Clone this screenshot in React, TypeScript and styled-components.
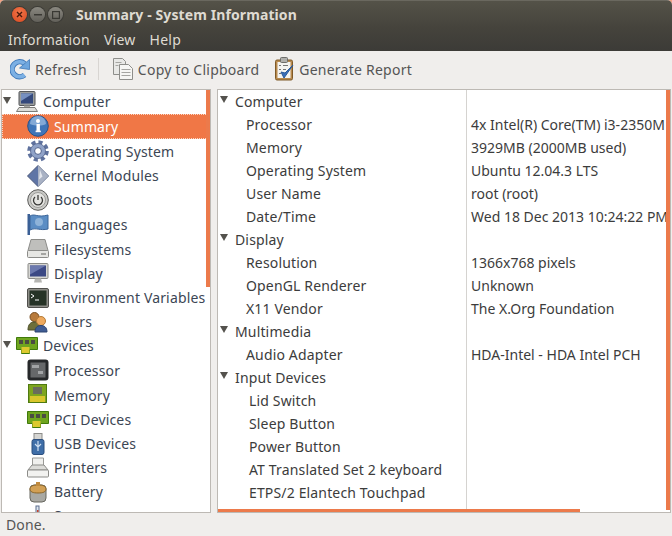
import React from 'react'
import styled, { createGlobalStyle } from 'styled-components'

const GlobalStyle = createGlobalStyle`
  html, body {
    margin: 0;
    padding: 0;
    width: 672px;
    height: 536px;
    overflow: hidden;
    background: #f2a283;
  }
`

const FONT = `"Noto Sans", "Open Sans", sans-serif`

const Window = styled.div`
  width: 672px;
  height: 536px;
  display: flex;
  flex-direction: column;
  overflow: hidden;
  border-radius: 5px 5px 0 0;
  background: #f0eeec;
  font-family: ${FONT};
  font-size: 14px;
  letter-spacing: 0.15px;
  color: #3c3c3c;
`

const TitleBar = styled.div`
  height: 28px;
  flex: none;
  display: flex;
  align-items: center;
  padding: 0 0 0 12px;
  background: linear-gradient(#545248, #45433c);
  border-top: 1px solid #6a685f;
  box-sizing: border-box;
`

const WindowButtons = styled.div`
  display: flex;
  gap: 3px;
  margin-right: 13px;
`

const WindowButton = styled.div<{ $close?: boolean }>`
  width: 15px;
  height: 15px;
  border-radius: 50%;
  display: flex;
  align-items: center;
  justify-content: center;
  box-shadow: 0 0 0 1px #3c3b36;
  background: ${(p) =>
    p.$close
      ? 'radial-gradient(circle at 50% 35%, #f2764a, #d9481f)'
      : 'linear-gradient(#8a8880, #62605a)'};
`

const Title = styled.div`
  font-weight: 700;
  font-size: 14px;
  letter-spacing: 0.1px;
  color: #dfdbd2;
`

const MenuBar = styled.div`
  height: 23px;
  flex: none;
  display: flex;
  align-items: center;
  gap: 14px;
  padding: 0 8px 1px;
  box-sizing: border-box;
  background: linear-gradient(#45433c, #3c3b37);
  color: #dfdbd2;
`

const MenuItem = styled.div`
  font-size: 14px;
  letter-spacing: 0.25px;
`

const Toolbar = styled.div`
  height: 38px;
  flex: none;
  display: flex;
  align-items: center;
  padding: 0 0 2px 10px;
  box-sizing: border-box;
  background: #f0eeec;
  color: #555;
  letter-spacing: 0.24px;
`

const ToolButton = styled.div<{ $gap?: number }>`
  display: flex;
  align-items: center;
  gap: 5px;
  margin-right: ${(p) => p.$gap ?? 0}px;
`

const ToolSeparator = styled.div`
  width: 1px;
  height: 22px;
  background: #d8d5d2;
  margin: 0 14px 0 11px;
`

const Panes = styled.div`
  flex: 1;
  min-height: 0;
  display: flex;
  gap: 6px;
  padding: 0 1px 0 1px;
`

const TreePane = styled.div`
  position: relative;
  width: 210px;
  box-sizing: border-box;
  flex: none;
  overflow: hidden;
  background: #fff;
  border: 1px solid #bdb9b4;
`

const ReportPane = styled.div`
  position: relative;
  flex: 1;
  box-sizing: border-box;
  overflow: hidden;
  background: #fff;
  border: 1px solid #bdb9b4;
  display: grid;
  grid-template-columns: 248px 1fr;
`

const TreeRow = styled.div<{ $selected?: boolean; $top?: boolean; $height: number }>`
  height: ${(p) => p.$height}px;
  box-sizing: border-box;
  padding-bottom: 1px;
  display: flex;
  align-items: center;
  white-space: nowrap;
  padding-left: ${(p) => (p.$top ? 1 : 25)}px;
  background: ${(p) => (p.$selected ? '#f07746' : 'transparent')};
  color: ${(p) => (p.$selected ? '#fff' : '#3c4654')};
  outline: ${(p) => (p.$selected ? '1px dotted #fbd7c5' : 'none')};
  outline-offset: -1px;
`

const Expander = styled.span`
  width: 0;
  height: 0;
  border-left: 4px solid transparent;
  border-right: 4px solid transparent;
  border-top: 7px solid #54524d;
  margin-right: 5px;
  margin-top: -2px;
  flex: none;
`

const TreeIcon = styled.span`
  width: 22px;
  height: 22px;
  flex: none;
  margin-right: 5px;
  display: block;
  svg {
    display: block;
  }
`

const Column = styled.div<{ $divider?: boolean }>`
  min-width: 0;
  overflow: hidden;
  border-left: ${(p) => (p.$divider ? '1px solid #d5d3d0' : 'none')};
`

const ReportRow = styled.div<{ $indent: number; $plain?: boolean }>`
  height: 23px;
  line-height: 23px;
  white-space: nowrap;
  padding-left: ${(p) => p.$indent}px;
  color: #3c3c3c;
  display: flex;
  align-items: center;
  letter-spacing: ${(p) => (p.$plain ? 0 : 0.15)}px;
`

const ReportExpander = styled(Expander)`
  margin: -5px 7px 0 -13px;
`

const Track = styled.div<{ $axis: 'x' | 'y' }>`
  position: absolute;
  background: #ec7a4b;
  ${(p) =>
    p.$axis === 'y'
      ? 'right: 0; top: 0; width: 4px;'
      : 'left: 0; bottom: 0; height: 3px;'}
`

const StatusBar = styled.div`
  height: 23px;
  flex: none;
  display: flex;
  align-items: center;
  padding: 0 0 1px 6px;
  box-sizing: border-box;
  color: #555;
`

type IconProps = { name: string }

/* small hand-drawn stand-ins for the hardinfo icon set */
const Icon: React.FC<IconProps> = ({ name }) => {
  const art: Record<string, React.ReactNode> = {
    computer: (
      <>
        <rect x="3" y="0.5" width="16" height="14" rx="1" fill="#9a9d9c" stroke="#55575a" />
        <rect x="5" y="2.500" width="12" height="10" fill="#34497c" />
        <path d="M5 2.500h12L5 10z" fill="#7690c0" />
        <path d="M8 14.500h6v2H8z" fill="#a5a5a2" />
        <path d="M3 16.500h16l2.500 4H0.500z" fill="#dcdcd8" stroke="#7b7b78" />
      </>
    ),
    info: (
      <>
        <circle cx="11" cy="11" r="10.300" fill="#3f75b8" stroke="#2a5288" />
        <path d="M3 9a8 8 0 0 1 16 0c-4 2-11 2-16 0z" fill="#83a9d6" />
        <rect x="9.500" y="9" width="3.400" height="8" fill="#fff" />
        <rect x="8.600" y="15.600" width="5.200" height="1.600" fill="#fff" />
        <circle cx="11" cy="6" r="2" fill="#fff" />
      </>
    ),
    gear: (
      <>
        <circle cx="11" cy="11" r="9" fill="none" stroke="#5f729e" strokeWidth="3.600" strokeDasharray="4.100 3" />
        <circle cx="11" cy="11" r="7.500" fill="#8fa2c8" stroke="#4f618c" strokeWidth="0.800" />
        <circle cx="11" cy="11" r="3.400" fill="#fff" stroke="#4f618c" />
      </>
    ),
    kernel: (
      <>
        <path d="M11 0.500L21.500 11 11 21.500 0.500 11z" fill="#5f75a6" stroke="#4a5878" />
        <path d="M11 0.500L21.500 11 11 21.500z" fill="#a9b2c4" />
        <path d="M13 5l2.500 6.500-3.500 3z" fill="#e3e6ec" />
      </>
    ),
    power: (
      <>
        <circle cx="11" cy="11" r="10.300" fill="#c9c9c6" stroke="#5c5c5a" />
        <circle cx="11" cy="11" r="7.500" fill="#e4e4e1" stroke="#9c9c99" />
        <path d="M8 8a4.500 4.500 0 1 0 6 0M11 6v5" fill="none" stroke="#3a3a38" strokeWidth="1.300" />
      </>
    ),
    flag: (
      <>
        <rect x="0.500" y="1" width="2.500" height="21" fill="#3a5f95" />
        <path d="M3 3c5-3 7 2 18-1v14c-8 2-12-2-18 1z" fill="#5b8dc4" stroke="#3a6498" />
        <circle cx="12" cy="9" r="4" fill="#8eb3d9" />
      </>
    ),
    disk: (
      <>
        <path d="M4 1.500h14l3 11H1z" fill="#bfbfbc" stroke="#8c8c89" />
        <rect x="0.500" y="12.500" width="21" height="7" rx="1" fill="#e6e6e3" stroke="#8c8c89" />
        <rect x="14" y="15" width="5" height="2" fill="#a5a5a2" />
      </>
    ),
    display: (
      <>
        <rect x="1" y="0.500" width="20" height="15" rx="1" fill="#d6d6d3" stroke="#8a8a87" />
        <rect x="3" y="2.500" width="16" height="11" fill="#3b4884" />
        <path d="M3 2.500h16L3 11.500z" fill="#6c79ae" />
        <path d="M8 15.500h6l1 4H7z" fill="#b5b5b2" />
      </>
    ),
    terminal: (
      <>
        <rect x="0.500" y="1.500" width="21" height="19" rx="1.500" fill="#8e8e88" stroke="#50504c" />
        <rect x="2.500" y="3.500" width="17" height="15" fill="#263326" />
        <path d="M4 7l3 2-3 2" fill="none" stroke="#fff" />
        <path d="M8 13h4" stroke="#fff" />
      </>
    ),
    users: (
      <>
        <circle cx="7.500" cy="6" r="4.500" fill="#b87a3a" stroke="#7a4e20" />
        <path d="M1 19c0-6 3-8 6-8s6 2 6 8z" fill="#6d6f3a" stroke="#4d4f28" />
        <circle cx="14" cy="10" r="4.500" fill="#eeaa5f" stroke="#b57a35" />
        <path d="M8 21c0-5 3-6.500 6-6.500s6 1.500 6 6.500z" fill="#3f5c94" stroke="#2d4470" />
      </>
    ),
    board: (
      <>
        <path d="M0.500 2.500h21v12h-8v4h-8v-4H0.500z" fill="#6fa51f" stroke="#3f7a0a" />
        <path d="M5.500 12h8v6h-8z" fill="#dcc92e" />
        <rect x="3" y="5" width="4" height="4" fill="#4a4c42" />
        <rect x="9" y="5" width="4" height="4" fill="#4a4c42" />
        <rect x="15" y="5" width="4" height="4" fill="#4a4c42" />
      </>
    ),
    cpu: (
      <>
        <rect x="0.500" y="0.500" width="21" height="21" rx="3" fill="#26282a" />
        <rect x="3.500" y="3.500" width="15" height="15" fill="#66686a" />
        <rect x="5" y="6" width="7" height="3" fill="#a2a4a6" />
        <rect x="11" y="12" width="5" height="3" fill="#a2a4a6" />
      </>
    ),
    memory: (
      <>
        <rect x="1.500" y="0.500" width="18" height="18" fill="#7ea51f" stroke="#4f7a10" />
        <path d="M3 12h15v6H3z" fill="#d9c62c" />
        <rect x="6" y="3" width="9" height="7" fill="#6a6c5c" />
      </>
    ),
    usb: (
      <>
        <rect x="7" y="0.500" width="8" height="6" fill="#d5d5d2" stroke="#8c8c89" />
        <rect x="5" y="6.500" width="12" height="15" rx="2" fill="#3f6ea8" stroke="#2b4e7e" />
        <path d="M11 8v10M8 11l3 3 3-3" fill="none" stroke="#cfe0f2" strokeWidth="1.200" />
      </>
    ),
    printer: (
      <>
        <path d="M5.500 1h11v8h-11z" fill="#f0f0ee" stroke="#9a9a97" />
        <path d="M5 8h12l4 5H1z" fill="#dcdcd9" stroke="#8c8c89" />
        <rect x="0.500" y="13" width="21" height="7" rx="1" fill="#f2f2f0" stroke="#8c8c89" />
      </>
    ),
    battery: (
      <>
        <rect x="3" y="4" width="16" height="17" rx="4" fill="#a9a9a4" stroke="#66665f" />
        <path d="M3 8c0-3 3-4 8-4s8 1 8 4-3 4-8 4-8-1-8-4z" fill="#d2a055" stroke="#8a6528" />
        <rect x="9" y="1" width="4" height="4" fill="#c08a3e" />
      </>
    ),
    sensor: (
      <>
        <rect x="9" y="1" width="3" height="18" fill="#dfe7f0" stroke="#5a6d8c" />
        <rect x="10" y="5" width="1.500" height="13" fill="#c8402a" />
      </>
    )
  }
  return (
    <svg width="22" height="22" viewBox="0 0 22 22">
      {art[name]}
    </svg>
  )
}

const RefreshIcon = () => (
  <svg width="20" height="22" viewBox="0 0 20 22">
    <path d="M14.500 5.500A7.500 7.500 0 1 0 14.500 17" fill="none" stroke="#3f78b8" strokeWidth="5.500" />
    <path d="M14.500 5.500A7.500 7.500 0 1 0 14.500 17" fill="none" stroke="#7cb0e4" strokeWidth="3.700" />
    <path d="M19.500 1.500v10l-10-1.500z" fill="#6ea6de" stroke="#3f78b8" strokeWidth="0.800" />
  </svg>
)

const CopyIcon = () => (
  <svg width="20" height="22" viewBox="0 0 20 22">
    <path d="M0.500 0.500h9l3 3v13h-12z" fill="#e8e8e6" stroke="#8e8e8b" />
    <path d="M6.500 6.500h9l4 4v11h-13z" fill="#f6f6f4" stroke="#8e8e8b" />
    <path d="M2.500 4.500h6M2.500 7.500h3M8.500 11.500h9M8.500 14.500h9M8.500 17.500h9" stroke="#a5a5a2" />
  </svg>
)

const ReportIcon = () => (
  <svg width="19" height="24" viewBox="0 0 19 24">
    <rect x="0.500" y="3" width="17" height="20" rx="1.500" fill="#b88a4e" stroke="#7f5a28" />
    <rect x="2.500" y="5" width="13" height="16" fill="#f4f4f2" />
    <rect x="5.500" y="0.500" width="7" height="5" rx="1" fill="#b0b0ad" stroke="#6e6e6b" />
    <path d="M4 8.500h2M8 8.500h5M4 12.500h2M8 12.500h3M4 16.500h2" stroke="#777" />
    <path d="M6 15l3 6 9-13-8 8z" fill="#3a6fb8" stroke="#2a5a9c" />
  </svg>
)

const CloseGlyph = () => (
  <svg width="7" height="7" viewBox="0 0 7 7">
    <path d="M1 1l5 5M6 1l-5 5" stroke="#4a1a0c" strokeWidth="1.400" />
  </svg>
)

const MinGlyph = () => (
  <svg width="8" height="2" viewBox="0 0 8 2">
    <rect width="8" height="1.500" fill="#3a3934" />
  </svg>
)

const MaxGlyph = () => (
  <svg width="8" height="8" viewBox="0 0 8 8">
    <rect x="0.600" y="0.600" width="6.800" height="6.800" fill="none" stroke="#3a3934" strokeWidth="1.200" />
  </svg>
)

const treeItems = [
  { label: 'Computer', icon: 'computer', height: 24, top: true },
  { label: 'Summary', icon: 'info', height: 25, selected: true },
  { label: 'Operating System', icon: 'gear', height: 25 },
  { label: 'Kernel Modules', icon: 'kernel', height: 24 },
  { label: 'Boots', icon: 'power', height: 24 },
  { label: 'Languages', icon: 'flag', height: 25 },
  { label: 'Filesystems', icon: 'disk', height: 25 },
  { label: 'Display', icon: 'display', height: 24 },
  { label: 'Environment Variables', icon: 'terminal', height: 24 },
  { label: 'Users', icon: 'users', height: 24 },
  { label: 'Devices', icon: 'board', height: 24, top: true },
  { label: 'Processor', icon: 'cpu', height: 25 },
  { label: 'Memory', icon: 'memory', height: 25 },
  { label: 'PCI Devices', icon: 'board', height: 24 },
  { label: 'USB Devices', icon: 'usb', height: 24 },
  { label: 'Printers', icon: 'printer', height: 24 },
  { label: 'Battery', icon: 'battery', height: 24 },
  { label: 'Sensors', icon: 'sensor', height: 24 }
]

const reportRows: { label: string; value?: string; level: 0 | 1 | 2 }[] = [
  { label: 'Computer', level: 0 },
  { label: 'Processor', value: '4x Intel(R) Core(TM) i3-2350M', level: 1 },
  { label: 'Memory', value: '3929MB (2000MB used)', level: 1 },
  { label: 'Operating System', value: 'Ubuntu 12.04.3 LTS', level: 1 },
  { label: 'User Name', value: 'root (root)', level: 1 },
  { label: 'Date/Time', value: 'Wed 18 Dec 2013 10:24:22 PM', level: 1 },
  { label: 'Display', level: 0 },
  { label: 'Resolution', value: '1366x768 pixels', level: 1 },
  { label: 'OpenGL Renderer', value: 'Unknown', level: 1 },
  { label: 'X11 Vendor', value: 'The X.Org Foundation', level: 1 },
  { label: 'Multimedia', level: 0 },
  { label: 'Audio Adapter', value: 'HDA-Intel - HDA Intel PCH', level: 1 },
  { label: 'Input Devices', level: 0 },
  { label: 'Lid Switch', level: 2 },
  { label: 'Sleep Button', level: 2 },
  { label: 'Power Button', level: 2 },
  { label: 'AT Translated Set 2 keyboard', level: 2 },
  { label: 'ETPS/2 Elantech Touchpad', level: 2 }
]

const indents = { 0: 15, 1: 28, 2: 31 }

export default function App() {
  return (
    <Window>
      <GlobalStyle />
      <TitleBar>
        <WindowButtons>
          <WindowButton $close>
            <CloseGlyph />
          </WindowButton>
          <WindowButton>
            <MinGlyph />
          </WindowButton>
          <WindowButton>
            <MaxGlyph />
          </WindowButton>
        </WindowButtons>
        <Title>Summary - System Information</Title>
      </TitleBar>
      <MenuBar>
        <MenuItem>Information</MenuItem>
        <MenuItem>View</MenuItem>
        <MenuItem>Help</MenuItem>
      </MenuBar>
      <Toolbar>
        <ToolButton>
          <RefreshIcon />
          Refresh
        </ToolButton>
        <ToolSeparator />
        <ToolButton $gap={16}>
          <CopyIcon />
          Copy to Clipboard
        </ToolButton>
        <ToolButton>
          <ReportIcon />
          Generate Report
        </ToolButton>
      </Toolbar>
      <Panes>
        <TreePane>
          {treeItems.map((item) => (
            <TreeRow key={item.label} $selected={item.selected} $top={item.top} $height={item.height}>
              {item.top && <Expander />}
              <TreeIcon>
                <Icon name={item.icon} />
              </TreeIcon>
              {item.label}
            </TreeRow>
          ))}
          <Track $axis="y" style={{ height: 197 }} />
        </TreePane>
        <ReportPane>
          <Column>
            {reportRows.map((row) => (
              <ReportRow key={row.label + row.level} $indent={indents[row.level]}>
                {row.level === 0 && <ReportExpander />}
                {row.label}
              </ReportRow>
            ))}
          </Column>
          <Column $divider>
            {reportRows.map((row) => (
              <ReportRow key={row.label + row.level} $indent={4} $plain>
                {row.value}
              </ReportRow>
            ))}
          </Column>
          <Track $axis="y" style={{ height: 420 }} />
          <Track $axis="x" style={{ width: 362 }} />
        </ReportPane>
      </Panes>
      <StatusBar>Done.</StatusBar>
    </Window>
  )
}
